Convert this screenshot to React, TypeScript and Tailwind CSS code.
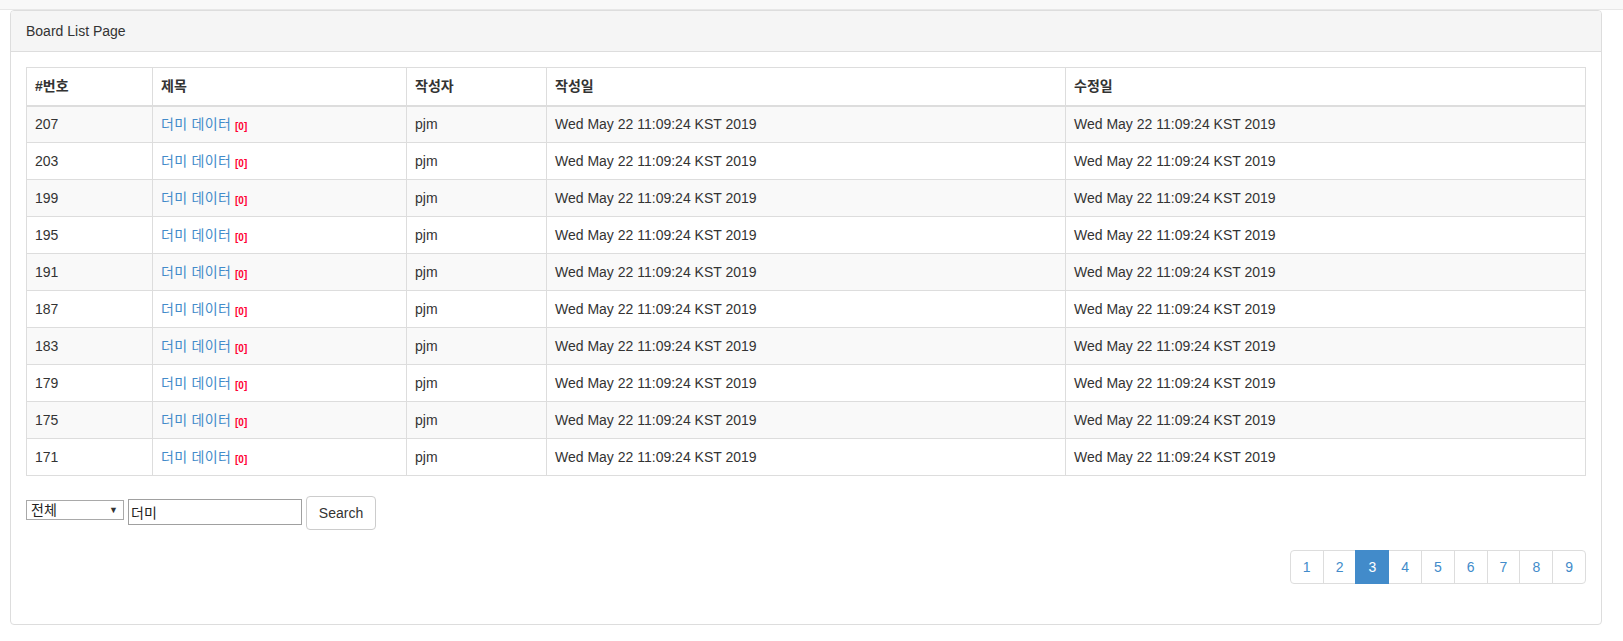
import { useState } from "react";

const rows = [207, 203, 199, 195, 191, 187, 183, 179, 175, 171];
const date = "Wed May 22 11:09:24 KST 2019";
const pages = [1, 2, 3, 4, 5, 6, 7, 8, 9];

const BoardRow = ({ no, index }: { no: number; index: number }) => (
  <tr className={index % 2 === 0 ? "bg-[#f9f9f9]" : "bg-white"}>
    <td className="h-[37px] border border-[#ddd] px-[8px] py-0 leading-[20px]">{no}</td>
    <td className="h-[37px] border border-[#ddd] px-[8px] py-0 leading-[20px]">
      <a href="#" className="tracking-[0.3px] text-[#428bca]">
        더미 데이터
      </a>{" "}
      <b className="relative top-[1px] text-[10px] leading-none text-[#ff0033]">[0]</b>
    </td>
    <td className="h-[37px] border border-[#ddd] px-[8px] py-0 leading-[20px]">pjm</td>
    <td className="h-[37px] border border-[#ddd] px-[8px] py-0 leading-[20px]">{date}</td>
    <td className="h-[37px] border border-[#ddd] px-[8px] py-0 leading-[20px]">{date}</td>
  </tr>
);

export default function App() {
  const [type, setType] = useState("all");
  const [keyword, setKeyword] = useState("더미");
  const current = 3;

  return (
    <div className="min-h-[641px] bg-white font-['Liberation_Sans','Noto_Sans_CJK_KR',sans-serif] text-[14px] text-[#333]">
      <div className="h-[10px] bg-[#f8f8f8] border-b border-[#e7e7e7]" />

      <div className="ml-[10px] w-[1592px] rounded-[4px] border border-[#ddd] bg-white">
        <div className="rounded-t-[3px] border-b border-[#ddd] bg-[#f5f5f5] px-[15px] py-[10px] leading-[20px]">
          Board List Page
        </div>

        <div className="px-[15px] pt-[15px] pb-[40px]">
          <table className="mb-[20px] w-full table-fixed border-collapse">
            <thead>
              <tr className="bg-white">
                <th className="h-[38px] w-[126px] border border-b-2 border-[#ddd] px-[8px] py-0 text-left font-bold leading-[20px]">
                  #번호
                </th>
                <th className="h-[38px] w-[254px] border border-b-2 border-[#ddd] px-[8px] py-0 text-left font-bold leading-[20px]">
                  제목
                </th>
                <th className="h-[38px] w-[140px] border border-b-2 border-[#ddd] px-[8px] py-0 text-left font-bold leading-[20px]">
                  작성자
                </th>
                <th className="h-[38px] w-[519px] border border-b-2 border-[#ddd] px-[8px] py-0 text-left font-bold leading-[20px]">
                  작성일
                </th>
                <th className="h-[38px] border border-b-2 border-[#ddd] px-[8px] py-0 text-left font-bold leading-[20px]">
                  수정일
                </th>
              </tr>
            </thead>
            <tbody>
              {rows.map((no, i) => (
                <BoardRow key={no} no={no} index={i} />
              ))}
            </tbody>
          </table>

          <form className="flex items-start gap-[4px]" onSubmit={(e) => e.preventDefault()}>
            <div className="relative mt-[4px] h-[20px] w-[98px]">
              <select
                value={type}
                onChange={(e) => setType(e.target.value)}
                className="h-full w-full appearance-none border border-[#a9a9a9] bg-white pl-[4px] text-[14px] leading-[18px] text-[#222] outline-none"
              >
                <option value="all">전체</option>
                <option value="title">제목</option>
                <option value="writer">작성자</option>
              </select>
              <span className="pointer-events-none absolute right-[6px] top-[4px] text-[9px] leading-[12px] text-[#333]">
                ▼
              </span>
            </div>
            <input
              value={keyword}
              onChange={(e) => setKeyword(e.target.value)}
              className="mt-[3px] h-[26px] w-[174px] border border-[#a0a0a0] px-[2px] text-[14px] text-[#222] outline-none"
            />
            <button
              type="submit"
              className="h-[34px] w-[70px] rounded-[4px] border border-[#ccc] bg-white text-[14px] leading-[20px] text-[#333]"
            >
              Search
            </button>
          </form>

          <div className="mt-[20px] flex justify-end">
            <ul className="flex">
              {pages.map((p, i) => (
                <li key={p} className={i === 0 ? "" : "-ml-px"}>
                  <a
                    href="#"
                    className={
                      "block h-[34px] border px-[12px] py-[6px] leading-[20px] " +
                      (i === 0 ? "rounded-l-[4px] " : "") +
                      (i === pages.length - 1 ? "rounded-r-[4px] " : "") +
                      (p === current
                        ? "relative z-10 border-[#428bca] bg-[#428bca] text-white"
                        : "border-[#ddd] bg-white text-[#428bca]")
                    }
                  >
                    {p}
                  </a>
                </li>
              ))}
            </ul>
          </div>
        </div>
      </div>
    </div>
  );
}
